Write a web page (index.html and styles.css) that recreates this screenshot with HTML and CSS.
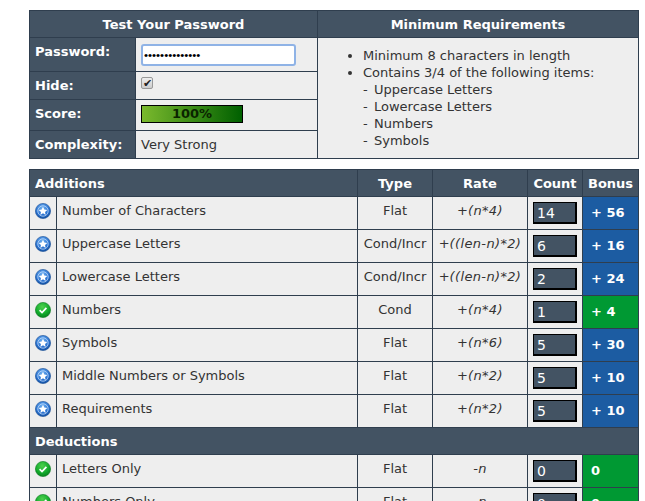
FILE: index.html
```html
<!DOCTYPE html>
<html lang="en">
<head>
<meta charset="utf-8">
<title>Password Meter</title>
<link rel="stylesheet" href="styles.css">
</head>
<body>
<svg class="defs" width="0" height="0" aria-hidden="true">
  <defs>
    <radialGradient id="gb" cx="45%" cy="30%" r="75%"><stop offset="0" stop-color="#6fb0f0"/><stop offset=".6" stop-color="#2a72d0"/><stop offset="1" stop-color="#104a98"/></radialGradient>
    <radialGradient id="gg" cx="45%" cy="30%" r="75%"><stop offset="0" stop-color="#4ed04e"/><stop offset=".6" stop-color="#12ab2c"/><stop offset="1" stop-color="#067a1c"/></radialGradient>
    <symbol id="bonus" viewBox="0 0 16 16">
      <circle cx="8" cy="8" r="7.6" fill="url(#gb)" stroke="#1a4f95" stroke-width=".6"/>
      <circle cx="8" cy="8" r="5.200" fill="none" stroke="#cfe4ff" stroke-width=".7"/>
      <path d="M8 3.800l1.300 2.800 3 .3-2.300 2 .7 3L8 10.300l-2.700 1.600.7-3-2.300-2 3-.3z" fill="#fff"/>
    </symbol>
    <symbol id="pass" viewBox="0 0 16 16">
      <circle cx="8" cy="8" r="7.6" fill="url(#gg)" stroke="#0b7a22" stroke-width=".6"/>
      <path d="M4.600 8.200l2.400 2.300 4.400-4.700" fill="none" stroke="#fff" stroke-width="1.700"/>
    </symbol>
  </defs>
</svg>
<main class="page">
  <table class="grid top">
    <colgroup><col class="c-label"><col class="c-field"><col></colgroup>
    <thead>
      <tr><th colspan="2">Test Your Password</th><th>Minimum Requirements</th></tr>
    </thead>
    <tbody>
      <tr class="r-pass">
        <th scope="row">Password:</th>
        <td><input class="pw" type="password" value="aB3$aB3$aB3$aB" aria-label="Password"></td>
        <td rowspan="4" class="reqs">
          <ul>
            <li>Minimum 8 characters in length</li>
            <li>Contains 3/4 of the following items:
              <div><span class="dash">-</span>Uppercase Letters</div>
              <div><span class="dash">-</span>Lowercase Letters</div>
              <div><span class="dash">-</span>Numbers</div>
              <div><span class="dash">-</span>Symbols</div>
            </li>
          </ul>
        </td>
      </tr>
      <tr class="r-hide">
        <th scope="row">Hide:</th>
        <td><input class="chk" type="checkbox" checked aria-label="Hide"></td>
      </tr>
      <tr class="r-score">
        <th scope="row">Score:</th>
        <td><div class="bar">100%</div></td>
      </tr>
      <tr class="r-cplx">
        <th scope="row">Complexity:</th>
        <td>Very Strong</td>
      </tr>
    </tbody>
  </table>

  <table class="grid calc">
    <colgroup><col class="c-ic"><col class="c-name"><col class="c-type"><col class="c-rate"><col class="c-count"><col class="c-bonus"></colgroup>
    <thead>
      <tr><th colspan="2" class="left">Additions</th><th>Type</th><th>Rate</th><th>Count</th><th>Bonus</th></tr>
    </thead>
    <tbody>
      <tr><td class="ic"><svg class="icon"><use href="#bonus"/></svg></td><td>Number of Characters</td><td class="mid">Flat</td><td class="mid">+<i>(n*4)</i></td><td class="cnt"><input value="14" readonly aria-label="Count"></td><td class="bon blue">+ 56</td></tr>
      <tr><td class="ic"><svg class="icon"><use href="#bonus"/></svg></td><td>Uppercase Letters</td><td class="mid">Cond/Incr</td><td class="mid">+<i>((len-n)*2)</i></td><td class="cnt"><input value="6" readonly aria-label="Count"></td><td class="bon blue">+ 16</td></tr>
      <tr><td class="ic"><svg class="icon"><use href="#bonus"/></svg></td><td>Lowercase Letters</td><td class="mid">Cond/Incr</td><td class="mid">+<i>((len-n)*2)</i></td><td class="cnt"><input value="2" readonly aria-label="Count"></td><td class="bon blue">+ 24</td></tr>
      <tr><td class="ic"><svg class="icon"><use href="#pass"/></svg></td><td>Numbers</td><td class="mid">Cond</td><td class="mid">+<i>(n*4)</i></td><td class="cnt"><input value="1" readonly aria-label="Count"></td><td class="bon green">+ 4</td></tr>
      <tr><td class="ic"><svg class="icon"><use href="#bonus"/></svg></td><td>Symbols</td><td class="mid">Flat</td><td class="mid">+<i>(n*6)</i></td><td class="cnt"><input value="5" readonly aria-label="Count"></td><td class="bon blue">+ 30</td></tr>
      <tr><td class="ic"><svg class="icon"><use href="#bonus"/></svg></td><td>Middle Numbers or Symbols</td><td class="mid">Flat</td><td class="mid">+<i>(n*2)</i></td><td class="cnt"><input value="5" readonly aria-label="Count"></td><td class="bon blue">+ 10</td></tr>
      <tr><td class="ic"><svg class="icon"><use href="#bonus"/></svg></td><td>Requirements</td><td class="mid">Flat</td><td class="mid">+<i>(n*2)</i></td><td class="cnt"><input value="5" readonly aria-label="Count"></td><td class="bon blue">+ 10</td></tr>
      <tr class="sect"><th colspan="6" class="left">Deductions</th></tr>
      <tr><td class="ic"><svg class="icon"><use href="#pass"/></svg></td><td>Letters Only</td><td class="mid">Flat</td><td class="mid"><i>-n</i></td><td class="cnt"><input value="0" readonly aria-label="Count"></td><td class="bon green">0</td></tr>
      <tr><td class="ic"><svg class="icon"><use href="#pass"/></svg></td><td>Numbers Only</td><td class="mid">Flat</td><td class="mid"><i>-n</i></td><td class="cnt"><input value="0" readonly aria-label="Count"></td><td class="bon green">0</td></tr>
    </tbody>
  </table>
</main>
</body>
</html>
```
FILE: styles.css
```css
html, body { margin: 0; height: 501px; overflow: hidden; background: #fff; }
body { font: 13px/17px "DejaVu Sans", Verdana, sans-serif; color: #333; }
.defs { position: absolute; }
.page { display: flex; flex-direction: column; gap: 10px; padding: 10px 0 0 29px; width: 610px; }
.grid { border-collapse: collapse; table-layout: fixed; width: 610px; background: #eee; }
.grid th, .grid td { border: 1px solid #2f3e4e; padding: 0 5px; }
.grid th { background: #435363; color: #fff; font-weight: bold; text-align: center; }
.grid th.left, .top tbody th { text-align: left; }
.top thead tr { height: 27px; }
.c-label { width: 106px; }
.c-field { width: 182px; }
.r-pass { height: 34px; }
.r-hide { height: 28px; }
.r-score { height: 31px; }
.r-cplx { height: 28px; }
.top .r-pass th { vertical-align: top; padding-top: 5px; }
.top .r-score th { padding-bottom: 3px; }
.top tbody td { vertical-align: middle; padding-left: 5px; }
.pw { display: block; box-sizing: border-box; width: 155px; height: 22px; margin: 0; padding: 0 1px; border: 2px solid #8fb3e6; border-radius: 3px; background: #fff; font: 11.500px "Liberation Sans", sans-serif; color: #000; outline: none; }
.chk { appearance: none; display: flex; align-items: center; justify-content: center; box-sizing: border-box; width: 12px; height: 12px; margin: 0 0 5px; border: 1px solid #999; border-radius: 2px; background: linear-gradient(#eee, #ccc); }
.chk::after { content: "\2714"; font-size: 11px; line-height: 10px; color: #222; }
.bar { box-sizing: border-box; width: 102px; height: 18px; margin-bottom: 2px; border: 1px solid #000; background: linear-gradient(to right, #7ab92d, #006000); color: #0a2400; font-size: 13px; font-weight: bold; line-height: 16px; text-align: center; }
.reqs { padding: 0; }
.top .reqs ul { margin: 0; padding: 0 0 0 40px; list-style: disc; }
.dash { display: inline-block; width: 11px; }
.calc thead tr { height: 27px; }
.calc tbody tr { height: 33px; }
.calc tbody tr.sect { height: 27px; }
.c-ic { width: 27px; }
.c-type { width: 75px; }
.c-rate { width: 95px; }
.c-count { width: 55px; }
.c-bonus { width: 56px; }
.calc td { vertical-align: top; padding-top: 5px; padding-left: 5px; }
.calc .ic { padding: 6px 0 0 5px; }
.icon { display: block; width: 16px; height: 16px; }
.calc .mid { text-align: center; padding-left: 0; padding-right: 0; }
.calc .mid i { letter-spacing: .35px; }
.calc .cnt { padding: 5px 0 0 5px; }
.cnt input { display: block; box-sizing: border-box; width: 44px; height: 22px; margin: 0; padding: 0 3px; border: 1px solid #000; border-width: 1px 2px 2px 1px; background: #435363; color: #fff; font: 14px "DejaVu Sans", sans-serif; outline: none; }
.calc .bon { color: #fff; font-weight: bold; font-size: 13px; padding: 7px 0 0 8px; border-color: #2f3e4e; }
.blue { background: #1c5ca2; }
.green { background: #009933; }
```
